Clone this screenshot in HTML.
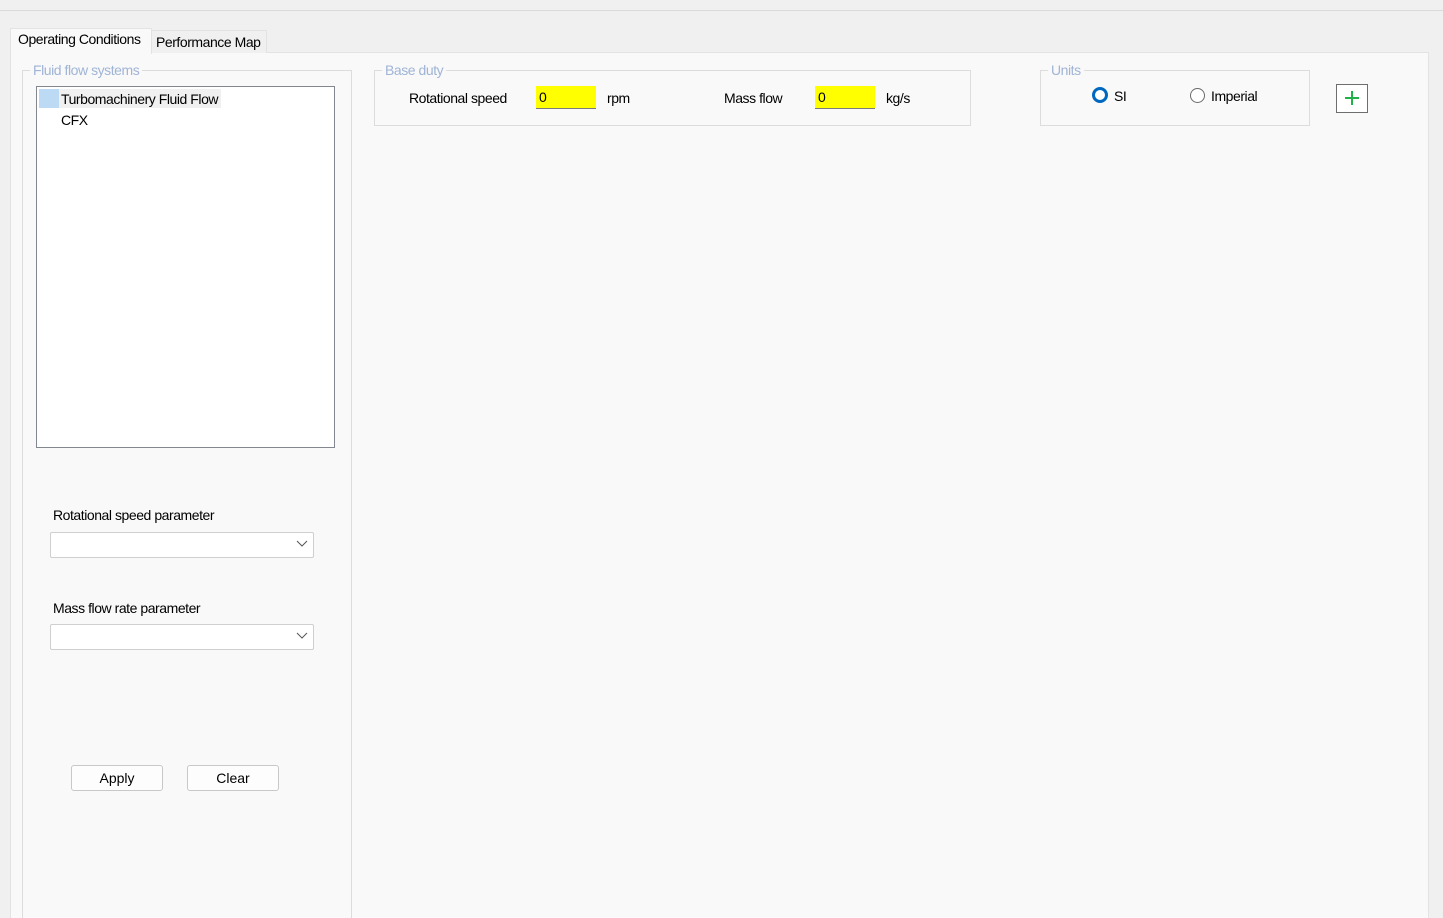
<!DOCTYPE html>
<html style="width:1443px;height:918px;overflow:hidden"><head><style>
body{margin:0;width:1443px;height:918px;background:#f0f0f0;position:relative;overflow:hidden;font-family:"Liberation Sans",sans-serif;font-size:14px;color:#000}
.a{position:absolute}
.t{position:absolute;white-space:nowrap;letter-spacing:-0.45px}
.gb{position:absolute;border:1px solid #dcdcdc}
.lg{position:absolute;background:#f9f9f9;color:#9fb4d6;padding:0 3px;font-size:14px;letter-spacing:-0.45px;line-height:14px}
.btn{position:absolute;background:#fdfdfd;border:1px solid #c8c8c8;border-radius:3px;text-align:center;line-height:24px}
.cb{position:absolute;background:#fff;border:1px solid #cfcfcf;border-radius:2px}
.yel{position:absolute;background:#ffff00;border-bottom:1px solid #7a7a7a;line-height:22px;padding-left:3px}
</style></head><body>
<div class="a" style="left:0;top:10px;width:1443px;height:1px;background:#dadada"></div>
<div class="a" style="left:10px;top:52px;width:1417px;height:866px;background:#f9f9f9;border-left:1px solid #e3e3e3;border-top:1px solid #e3e3e3;border-right:1px solid #e3e3e3"></div>
<div class="a" style="left:10px;top:28px;width:140px;height:25px;background:#f9f9f9;border:1px solid #e3e3e3;border-bottom:none"></div>
<div class="t" style="left:18px;top:31px">Operating Conditions</div>
<div class="a" style="left:151px;top:30px;width:114px;height:22px;background:#f0f0f0;border:1px solid #e3e3e3;border-bottom:none"></div>
<div class="t" style="left:156px;top:34px">Performance Map</div>
<div class="a" style="left:22px;top:70px;width:328px;height:848px;border-left:1px solid #dcdcdc;border-top:1px solid #dcdcdc;border-right:1px solid #dcdcdc"></div>
<div class="lg" style="left:30px;top:63px">Fluid flow systems</div>
<div class="a" style="left:36px;top:86px;width:297px;height:360px;background:#fff;border:1px solid #828790"></div>
<div class="a" style="left:39px;top:89px;width:20px;height:19px;background:#bcdaf3"></div>
<div class="a" style="left:59px;top:89px;width:162px;height:19px;background:#f0f0f0"></div>
<div class="t" style="left:61px;top:91px">Turbomachinery Fluid Flow</div>
<div class="t" style="left:61px;top:112px">CFX</div>
<div class="t" style="left:53px;top:507px">Rotational speed parameter</div>
<div class="cb" style="left:50px;top:532px;width:262px;height:24px"></div>
<svg class="a" style="left:296px;top:540px" width="12" height="8"><path d="M1 1L6 6L11 1" stroke="#555" fill="none"/></svg>
<div class="t" style="left:53px;top:600px">Mass flow rate parameter</div>
<div class="cb" style="left:50px;top:624px;width:262px;height:24px"></div>
<svg class="a" style="left:296px;top:632px" width="12" height="8"><path d="M1 1L6 6L11 1" stroke="#555" fill="none"/></svg>
<div class="btn" style="left:71px;top:765px;width:90px;height:24px">Apply</div>
<div class="btn" style="left:187px;top:765px;width:90px;height:24px">Clear</div>
<div class="gb" style="left:374px;top:70px;width:595px;height:54px"></div>
<div class="lg" style="left:382px;top:63px">Base duty</div>
<div class="t" style="left:409px;top:90px">Rotational speed</div>
<div class="yel" style="left:536px;top:86px;width:57px;height:22px">0</div>
<div class="t" style="left:607px;top:90px">rpm</div>
<div class="t" style="left:724px;top:90px">Mass flow</div>
<div class="yel" style="left:815px;top:86px;width:57px;height:22px">0</div>
<div class="t" style="left:886px;top:90px">kg/s</div>
<div class="gb" style="left:1040px;top:70px;width:268px;height:54px"></div>
<div class="lg" style="left:1048px;top:63px">Units</div>
<div class="a" style="left:1092px;top:87px;width:10px;height:10px;border:3px solid #0067c0;border-radius:50%;background:#fff"></div>
<div class="t" style="left:1114px;top:88px">SI</div>
<div class="a" style="left:1190px;top:88px;width:13px;height:13px;border:1px solid #6a6a6a;border-radius:50%;background:#fff"></div>
<div class="t" style="left:1211px;top:88px">Imperial</div>
<div class="a" style="left:1336px;top:84px;width:30px;height:27px;border:1px solid #6e6e6e;background:#fff"></div>
<svg class="a" style="left:1344px;top:90px" width="16" height="16"><path d="M8 1V15M1 8H15" stroke="#1fb14a" stroke-width="2"/></svg>
</body></html>
